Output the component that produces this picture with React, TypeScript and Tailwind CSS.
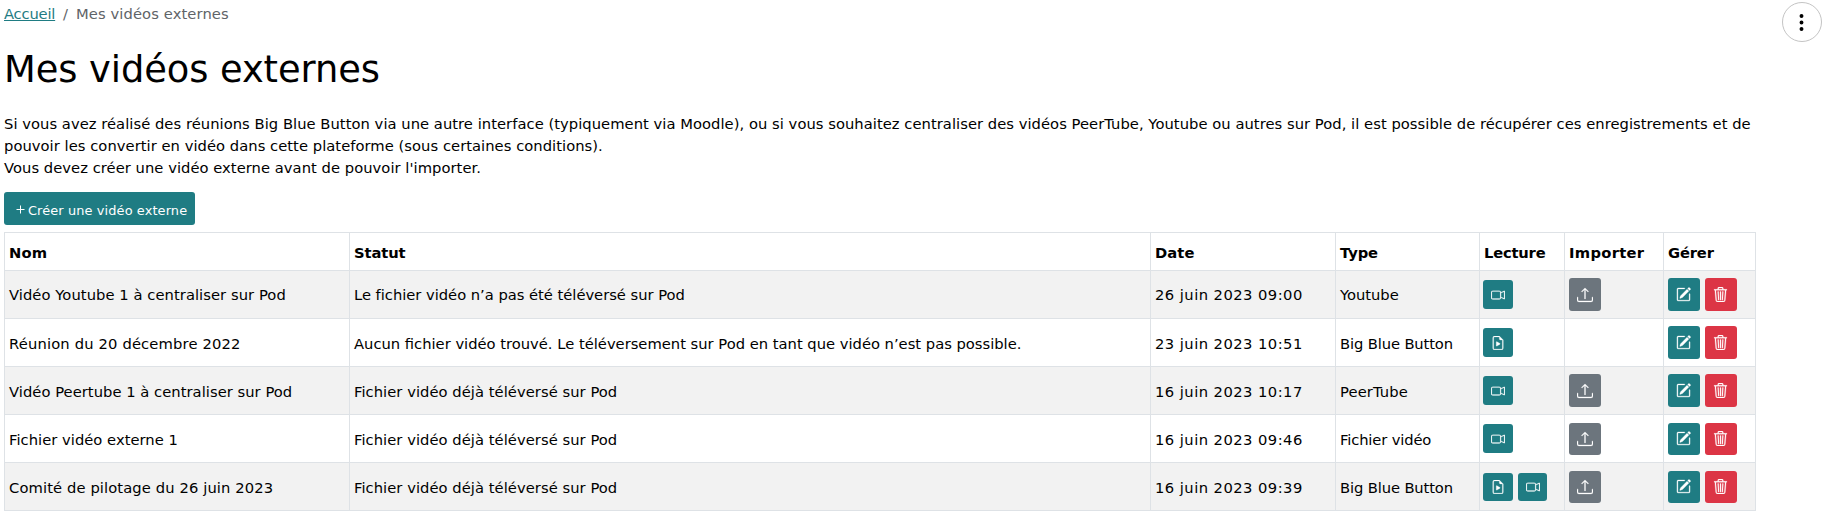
import React from "react";
import { BsCameraVideo, BsFileEarmarkPlay, BsUpload, BsPencilSquare, BsTrash3, BsThreeDotsVertical } from "react-icons/bs";

type Row = {
  name: string;
  nameSpacing: string;
  status: string;
  statusSpacing: string;
  date: string;
  type: string;
  typeSpacing: string;
  play: ("camera" | "file")[];
  upload: boolean;
};

const rows: Row[] = [
  { name: "Vidéo Youtube 1 à centraliser sur Pod", nameSpacing: "tracking-[0.06px]", status: "Le fichier vidéo n’a pas été téléversé sur Pod", statusSpacing: "tracking-[-0.02px]", date: "26 juin 2023 09:00", type: "Youtube", typeSpacing: "tracking-[-0.02px]", play: ["camera"], upload: true },
  { name: "Réunion du 20 décembre 2022", nameSpacing: "tracking-[0.16px]", status: "Aucun fichier vidéo trouvé. Le téléversement sur Pod en tant que vidéo n’est pas possible.", statusSpacing: "tracking-[0px]", date: "23 juin 2023 10:51", type: "Big Blue Button", typeSpacing: "tracking-[-0.12px]", play: ["file"], upload: false },
  { name: "Vidéo Peertube 1 à centraliser sur Pod", nameSpacing: "tracking-[0.04px]", status: "Fichier vidéo déjà téléversé sur Pod", statusSpacing: "tracking-[0.05px]", date: "16 juin 2023 10:17", type: "PeerTube", typeSpacing: "tracking-[0.12px]", play: ["camera"], upload: true },
  { name: "Fichier vidéo externe 1", nameSpacing: "tracking-[0.03px]", status: "Fichier vidéo déjà téléversé sur Pod", statusSpacing: "tracking-[0.05px]", date: "16 juin 2023 09:46", type: "Fichier vidéo", typeSpacing: "tracking-[-0.14px]", play: ["camera"], upload: true },
  { name: "Comité de pilotage du 26 juin 2023", nameSpacing: "tracking-[0.11px]", status: "Fichier vidéo déjà téléversé sur Pod", statusSpacing: "tracking-[0.05px]", date: "16 juin 2023 09:39", type: "Big Blue Button", typeSpacing: "tracking-[-0.12px]", play: ["file", "camera"], upload: true },
];

const headers = [
  { label: "Nom", spacing: "tracking-[0.1px]" },
  { label: "Statut", spacing: "tracking-[-0.1px]" },
  { label: "Date", spacing: "tracking-[0.1px]" },
  { label: "Type", spacing: "tracking-[-0.1px]" },
  { label: "Lecture", spacing: "tracking-[-0.2px]" },
  { label: "Importer", spacing: "tracking-[0.3px]" },
  { label: "Gérer", spacing: "tracking-[-0.15px]" },
];

const grid = "grid grid-cols-[345px_801px_185px_144px_85px_99px_92px]";
const cell = "flex items-center border-r border-b border-[#dee2e6] pl-1 whitespace-nowrap";
const headerCell = `${cell} pt-[2px]`;
const action = "flex w-8 items-center justify-center rounded-[3px] text-white";

export default function App() {
  return (
    <div className="flex h-[529px] w-[1827px] items-start justify-between overflow-hidden bg-white font-['Verdana','DejaVu_Sans',sans-serif] text-[14.72px] leading-[22px] text-black">
      <main className="ml-1 w-[1752px]">
        <nav className="flex h-[28px] pt-[3px] whitespace-nowrap text-[#5f6468]">
          <a className="w-[50px] tracking-[-0.2px] text-[#1f7c83] underline" href="#">Accueil</a>
          <span className="w-[22px] pl-[9px]">/</span>
          <span className="tracking-[0.1px]">Mes vidéos externes</span>
        </nav>
        <h1 className="flex h-[85px] items-center pb-[2px] text-[36.8px] leading-[44px] tracking-[-0.06px] whitespace-nowrap">Mes vidéos externes</h1>
        <p className="h-[79px] tracking-[0.043px] whitespace-nowrap">
          Si vous avez réalisé des réunions Big Blue Button via une autre interface (typiquement via Moodle), ou si vous souhaitez centraliser des vidéos PeerTube, Youtube ou autres sur Pod, il est possible de récupérer ces enregistrements et de
          <br />
          pouvoir les convertir en vidéo dans cette plateforme (sous certaines conditions).
          <br />
          Vous devez créer une vidéo externe avant de pouvoir l'importer.
        </p>
        <button className="flex h-[33px] w-[191px] items-center rounded-[3px] bg-[#1f7c83] pt-1 pl-3 text-[12.9px] whitespace-nowrap text-white">
          <svg className="mt-[-2px] mr-[3px] size-[9px]" viewBox="0 0 9 9" stroke="currentColor" strokeWidth="1">
            <path d="M4.5 0.5v8M0.5 4.5h8" />
          </svg>
          <span className="tracking-[0.12px]">Créer une vidéo externe</span>
        </button>
        <div className="mt-[7px] w-[1752px] border-t border-l border-[#dee2e6]">
          <div className={`${grid} h-[38px] font-bold`}>
            {headers.map((h) => (
              <div key={h.label} className={`${headerCell} ${h.spacing}`}>{h.label}</div>
            ))}
          </div>
          {rows.map((r, i) => {
            const textCell = i === 0 ? `${cell} pt-px` : `${cell} pt-[3px]`;
            const actionHeight = i < 3 ? "h-[33px]" : "h-8";
            return (
              <div key={r.name} className={`${grid} h-12 ${i % 2 === 0 ? "bg-[#f2f2f2]" : "bg-white"}`}>
                <div className={`${textCell} ${r.nameSpacing}`}>{r.name}</div>
                <div className={`${textCell} ${r.statusSpacing}`}>{r.status}</div>
                <div className={`${textCell} tracking-[0.46px]`}>{r.date}</div>
                <div className={`${textCell} ${r.typeSpacing}`}>{r.type}</div>
                <div className="flex items-center gap-[5px] border-r border-b border-[#dee2e6] pl-[3px]">
                  {r.play.map((p, n) => (
                    <button key={p} className={`flex ${r.play.length > 1 ? "h-[28px]" : "h-[29px]"} ${n === 0 ? "w-[30px]" : "w-[29px]"} items-center justify-center rounded-[3px] bg-[#1f7c83] text-white`}>
                      {p === "camera" ? <BsCameraVideo size={14} strokeWidth={0.2} /> : <BsFileEarmarkPlay size={14} strokeWidth={0.3} />}
                    </button>
                  ))}
                </div>
                <div className={cell}>
                  {r.upload && (
                    <button className={`${action} ${actionHeight} bg-[#6c757d]`}>
                      <BsUpload size={16} strokeWidth={0.3} />
                    </button>
                  )}
                </div>
                <div className={`${cell} gap-[5px]`}>
                  <button className={`${action} ${actionHeight} bg-[#1f7c83]`}>
                    <BsPencilSquare className="-ml-px" size={15} strokeWidth={0.3} />
                  </button>
                  <button className={`${action} ${actionHeight} bg-[#dc3545]`}>
                    <BsTrash3 className="-ml-px" size={15} strokeWidth={0.3} />
                  </button>
                </div>
              </div>
            );
          })}
        </div>
      </main>
      <button className="mt-[2px] mr-[5px] flex size-10 items-center justify-center rounded-full border border-[#c4c4c4]">
        <BsThreeDotsVertical className="-ml-px" size={21} />
      </button>
    </div>
  );
}
